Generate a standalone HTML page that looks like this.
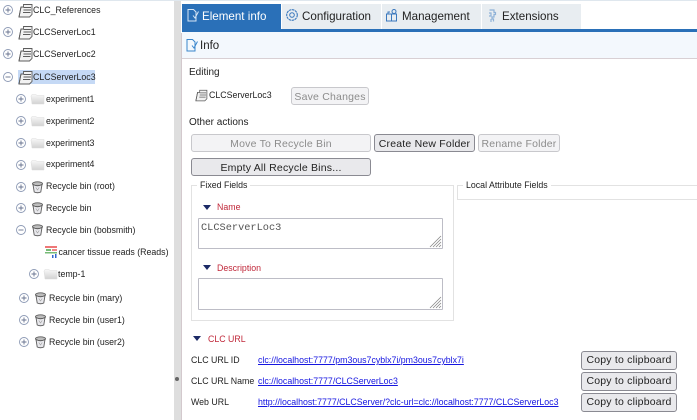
<!DOCTYPE html>
<html><head><meta charset="utf-8"><style>
html,body{margin:0;padding:0;background:#fff}
html{width:697px;height:420px;overflow:hidden}
body{width:697px;height:420px;overflow:hidden;position:relative;font-family:"Liberation Sans",sans-serif;color:#111}
#w{position:absolute;left:0;top:0;width:697px;height:420px;overflow:hidden;filter:blur(.3px)}
.a{position:absolute;white-space:nowrap}
.t{position:absolute;white-space:nowrap;font-size:8.8px;line-height:12px;color:#222}
.btn{position:absolute;box-sizing:border-box;border:1px solid #8a8a92;border-radius:3px;background:#e9e9ec;font-size:10.5px;text-align:center;color:#222;letter-spacing:.2px;line-height:18px}
.dis{border-color:#c8c8cc;background:#f3f3f5;color:#8c8c8c}
.tab{position:absolute;top:4px;height:25px;background:#e8edf1;font-size:11.6px;line-height:26px;color:#222}
.box{position:absolute;box-sizing:border-box;border:1px solid #e2e2e2}
.ta{position:absolute;box-sizing:border-box;border:1px solid #bdbdc6;border-radius:1px;background:#fff;font-family:"Liberation Mono",monospace;font-size:10.3px;color:#555;padding:3px 2px;line-height:12px}
.red{position:absolute;white-space:nowrap;color:#c0283a;font-size:8.8px;line-height:12px}
.tri{position:absolute;width:0;height:0;border-left:4px solid transparent;border-right:4px solid transparent;border-top:5px solid #1c2a66}
.lab{position:absolute;white-space:nowrap;font-size:8.8px;line-height:12px;color:#222}
.lnk{position:absolute;white-space:nowrap;font-size:8.8px;line-height:12px;color:#1515e0;text-decoration:underline}
svg{position:absolute;overflow:visible;width:15px;height:15px}
</style></head><body><div id="w">
<svg style="position:absolute;width:0;height:0;left:0;top:0"><defs>
<linearGradient id="fg" x1="0" y1="0" x2="0" y2="1"><stop offset="0" stop-color="#f8f8f8"/><stop offset="1" stop-color="#d2d2d2"/></linearGradient>
<g id="p" fill="none" stroke="#8d9ab5" stroke-width=".9"><circle cx="5" cy="5" r="4.500"/><path d="M2.500 5H7.500M5 2.500V7.500" stroke="#68738f"/></g>
<g id="m" fill="none" stroke="#8d9ab5" stroke-width=".9"><circle cx="5" cy="5" r="4.500"/><path d="M2.500 5H7.500" stroke="#68738f"/></g>
<g id="srv" fill="none" stroke="#5c5c5c" stroke-width=".9"><path d="M1 14L3 4H5.500V1.500H14V11.500L11.500 14Z" fill="#f2f2f2"/><path d="M3 4L1 14M5.500 4.500H13M5.500 7H13M5 9.500H12.500"/></g>
<g id="fld"><path d="M0 3L1 1.500H5L6 2.500H13V11H1Z" fill="url(#fg)" stroke="#dcdcdc" stroke-width=".5"/></g>
<g id="bin"><ellipse cx="5.500" cy="2.800" rx="5" ry="2" fill="#bdbdbd" stroke="#5c5c5c" stroke-width=".9"/><path d="M1 3.500L2.200 11Q5.500 12.500 8.800 11L10 3.500Q5.500 6 1 3.500Z" fill="#e8e8ec" stroke="#5c5c5c" stroke-width=".9"/><path d="M3.800 6.500L5.500 9L7.200 6.500" stroke="#999" stroke-width=".6" fill="none"/></g>
<g id="doc" fill="none" stroke-width="1"><path d="M1 .5H6.500L9 3V12H1Z"/><path d="M6 6.500L8 9L11.500 2.500"/></g>
</defs></svg>

<div class="a" style="left:0;top:0;width:697px;height:1px;background:#dfe7ee"></div>
<div class="a" style="left:18px;top:70px;width:77px;height:14px;background:#c5d9f5"></div>
<svg style="left:3px;top:5px"><use href="#p"/></svg><svg style="left:18px;top:3px"><use href="#srv"/></svg><div class="t" style="left:33px;top:4px">CLC_References</div>
<svg style="left:3px;top:27px"><use href="#p"/></svg><svg style="left:18px;top:25px"><use href="#srv"/></svg><div class="t" style="left:33px;top:26px">CLCServerLoc1</div>
<svg style="left:3px;top:49px"><use href="#p"/></svg><svg style="left:18px;top:47px"><use href="#srv"/></svg><div class="t" style="left:33px;top:48px">CLCServerLoc2</div>
<svg style="left:3px;top:72px"><use href="#m"/></svg><svg style="left:18px;top:70px"><use href="#srv"/></svg><div class="t" style="left:33px;top:71px">CLCServerLoc3</div>
<svg style="left:16px;top:94px"><use href="#p"/></svg><svg style="left:31px;top:93px"><use href="#fld"/></svg><div class="t" style="left:46px;top:93px">experiment1</div>
<svg style="left:16px;top:116px"><use href="#p"/></svg><svg style="left:31px;top:115px"><use href="#fld"/></svg><div class="t" style="left:46px;top:115px">experiment2</div>
<svg style="left:16px;top:138px"><use href="#p"/></svg><svg style="left:31px;top:137px"><use href="#fld"/></svg><div class="t" style="left:46px;top:137px">experiment3</div>
<svg style="left:16px;top:160px"><use href="#p"/></svg><svg style="left:31px;top:159px"><use href="#fld"/></svg><div class="t" style="left:46px;top:158px">experiment4</div>
<svg style="left:16px;top:182px"><use href="#p"/></svg><svg style="left:32px;top:181px"><use href="#bin"/></svg><div class="t" style="left:46px;top:180px">Recycle bin (root)</div>
<svg style="left:16px;top:203px"><use href="#p"/></svg><svg style="left:32px;top:202px"><use href="#bin"/></svg><div class="t" style="left:46px;top:202px">Recycle bin</div>
<svg style="left:16px;top:225px"><use href="#m"/></svg><svg style="left:32px;top:224px"><use href="#bin"/></svg><div class="t" style="left:46px;top:224px">Recycle bin (bobsmith)</div>
<svg style="left:45px;top:246px"><rect x="0" y="0" width="12" height="2" fill="#e77"/><rect x="1" y="3" width="5" height="2" fill="#7b7"/><rect x="7" y="3" width="5" height="2" fill="#e88"/><rect x="0" y="6" width="12" height="1.500" fill="#7b7"/><rect x="7" y="9" width="1.500" height="3" fill="#36c"/><rect x="10" y="8" width="1.500" height="4" fill="#36c"/></svg><div class="t" style="left:58.500px;top:246px">cancer tissue reads (Reads)</div>
<svg style="left:29px;top:269px"><use href="#p"/></svg><svg style="left:44px;top:268px"><use href="#fld"/></svg><div class="t" style="left:58px;top:268px">temp-1</div>
<svg style="left:19px;top:293px"><use href="#p"/></svg><svg style="left:35px;top:292px"><use href="#bin"/></svg><div class="t" style="left:49px;top:292px">Recycle bin (mary)</div>
<svg style="left:19px;top:315px"><use href="#p"/></svg><svg style="left:35px;top:314px"><use href="#bin"/></svg><div class="t" style="left:49px;top:314px">Recycle bin (user1)</div>
<svg style="left:19px;top:337px"><use href="#p"/></svg><svg style="left:35px;top:336px"><use href="#bin"/></svg><div class="t" style="left:49px;top:336px">Recycle bin (user2)</div>

<div class="a" style="left:174px;top:1px;width:7px;height:419px;background:#dedede"></div>
<div class="a" style="left:175px;top:377px;width:4px;height:4px;border-radius:50%;background:#666"></div>
<div class="a" style="left:181px;top:33px;width:1px;height:387px;background:#d3c9cd"></div>

<div class="a" style="left:182px;top:4px;width:99px;height:25px;background:#2a70b8;color:#fff;font-size:11.600px;line-height:26px;padding-left:20px;box-sizing:border-box">Element info</div>
<svg style="left:187px;top:9px"><use href="#doc" stroke="#d5e5f5"/></svg>
<div class="tab" style="left:282px;width:99px;padding-left:20px;box-sizing:border-box">Configuration</div>
<svg style="left:286px;top:9px" fill="none" stroke="#3a78bd"><circle cx="6" cy="6" r="5.300" stroke-width="1.100" stroke-dasharray="2.500 .6"/><circle cx="6" cy="6" r="2.300" stroke-width="1"/></svg>
<div class="tab" style="left:382px;width:99px;padding-left:20px;box-sizing:border-box">Management</div>
<svg style="left:386px;top:9px" fill="none" stroke="#3a78bd" stroke-width="1"><rect x=".5" y="5" width="5" height="7"/><rect x="5.500" y="5" width="5" height="7"/><circle cx="8" cy="2.500" r="2"/><path d="M2 5V3H4"/></svg>
<div class="tab" style="left:482px;width:99px;padding-left:20px;box-sizing:border-box">Extensions</div>
<svg style="left:488px;top:9px" fill="none" stroke="#8fb2d8" stroke-width="1.200"><path d="M1.500 1H6V3.500H7.500V5.500H6V8H4V10H5.500V12.500"/><path d="M1 4H3V7H1M3 13V10"/></svg>
<div class="a" style="left:182px;top:29px;width:515px;height:3px;background:#2a70b8"></div>

<div class="a" style="left:182px;top:32px;width:515px;height:26px;background:#f3f8fd;border-bottom:1px solid #d8d0d4"></div>
<svg style="left:186px;top:39px"><use href="#doc" stroke="#3a86cc"/></svg>
<div class="a" style="left:200px;top:39px;font-size:11.500px;line-height:14px;color:#222">Info</div>

<div class="a" style="left:189px;top:66px;font-size:10px;line-height:13px;color:#222">Editing</div>
<svg style="left:195px;top:89px;transform:scale(.85);transform-origin:0 0"><use href="#srv"/></svg>
<div class="t" style="left:209px;top:89px">CLCServerLoc3</div>
<div class="btn dis" style="left:291px;top:87px;width:78px;height:18px">Save Changes</div>

<div class="a" style="left:189px;top:116px;font-size:10px;line-height:13px;color:#222">Other actions</div>
<div class="btn dis" style="left:191px;top:134px;width:180px;height:18px">Move To Recycle Bin</div>
<div class="btn" style="left:374px;top:134px;width:101px;height:18px">Create New Folder</div>
<div class="btn dis" style="left:478px;top:134px;width:82px;height:18px">Rename Folder</div>
<div class="btn" style="left:191px;top:158px;width:180px;height:18px">Empty All Recycle Bins...</div>

<div class="box" style="left:191px;top:185px;width:263px;height:136px"></div>
<div class="a" style="left:197px;top:179px;background:#fff;padding:0 3px;font-size:8.800px;line-height:12px;color:#222">Fixed Fields</div>
<div class="box" style="left:457px;top:185px;width:240px;height:15px;border-right:0"></div>
<div class="a" style="left:463px;top:179px;background:#fff;padding:0 3px;font-size:8.800px;line-height:12px;color:#222">Local Attribute Fields</div>

<div class="tri" style="left:203px;top:205px"></div>
<div class="red" style="left:217px;top:201px">Name</div>
<div class="ta" style="left:198px;top:218px;width:245px;height:31px">CLCServerLoc3</div>
<svg style="left:428px;top:235px" stroke="#888" stroke-width=".8"><path d="M2 12L13 1M5 12L13 4M8 12L13 7M11 12L13 10"/></svg>
<div class="tri" style="left:203px;top:265px"></div>
<div class="red" style="left:217px;top:262px">Description</div>
<div class="ta" style="left:198px;top:278px;width:245px;height:32px"></div>
<svg style="left:428px;top:296px" stroke="#888" stroke-width=".8"><path d="M2 12L13 1M5 12L13 4M8 12L13 7M11 12L13 10"/></svg>

<div class="tri" style="left:193px;top:336px"></div>
<div class="red" style="left:208px;top:333px">CLC URL</div>
<div class="lab" style="left:191px;top:354px">CLC URL ID</div>
<div class="lnk" style="left:258px;top:354px">clc://localhost:7777/pm3ous7cyblx7i/pm3ous7cyblx7i</div>
<div class="lab" style="left:191px;top:375px">CLC URL Name</div>
<div class="lnk" style="left:258px;top:375px">clc://localhost:7777/CLCServerLoc3</div>
<div class="lab" style="left:191px;top:396px">Web URL</div>
<div class="lnk" style="left:258px;top:396px">http://localhost:7777/CLCServer/?clc-url=clc://localhost:7777/CLCServerLoc3</div>
<div class="btn" style="left:581px;top:351px;width:96px;height:19px;line-height:17px">Copy to clipboard</div>
<div class="btn" style="left:581px;top:372px;width:96px;height:19px;line-height:17px">Copy to clipboard</div>
<div class="btn" style="left:581px;top:393px;width:96px;height:19px;line-height:17px">Copy to clipboard</div>
</div></body></html>
